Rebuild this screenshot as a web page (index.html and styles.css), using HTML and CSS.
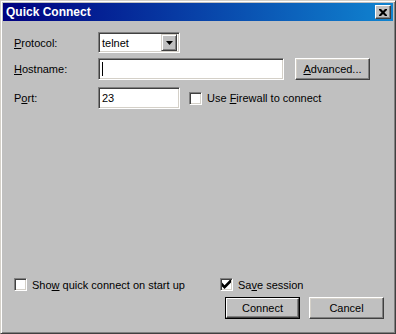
FILE: index.html
```html
<!DOCTYPE html>
<html lang="en">
<head>
    <meta charset="UTF-8">
    <title>Quick Connect</title>
    <link rel="stylesheet" href="styles.css">
</head>
<body>
    <div class="window">
        <div class="title-bar">
            <span class="title">Quick Connect</span>
            <button class="close-btn">
                <svg width="8" height="7" viewBox="0 0 8 7"><path d="M0 0h2l2 2 2-2h2v1l-2.5 2.5L8 6v1H6L4 5 2 7H0V6l2.5-2.5L0 1z" fill="#000"/></svg>
            </button>
        </div>
        <div class="content">
            <div class="row row-protocol">
                <label class="field-label"><u>P</u>rotocol:</label>
                <div class="select">
                    <span class="select-value">telnet</span>
                    <span class="select-arrow">
                        <svg width="7" height="4" viewBox="0 0 7 4"><path d="M0 0h7L3.5 4z" fill="#000"/></svg>
                    </span>
                </div>
            </div>
            <div class="row row-host">
                <label class="field-label"><u>H</u>ostname:</label>
                <div class="field host-field"><span class="caret"></span></div>
                <button class="btn advanced-btn"><u>A</u>dvanced...</button>
            </div>
            <div class="row row-port">
                <label class="field-label">P<u>o</u>rt:</label>
                <div class="field port-field">23</div>
                <label class="check firewall-check">
                    <span class="box"></span>
                    <span>Use <u>F</u>irewall to connect</span>
                </label>
            </div>
            <div class="spacer"></div>
            <div class="options">
                <label class="check startup-check">
                    <span class="box"></span>
                    <span>Sho<u>w</u> quick connect on start up</span>
                </label>
                <label class="check">
                    <span class="box">
                        <svg width="9" height="9" viewBox="0 0 7 7"><path d="M0 2v3l2 2 5-5V-1L2 4z" fill="#000"/></svg>
                    </span>
                    <span>Sa<u>v</u>e session</span>
                </label>
            </div>
            <div class="actions">
                <button class="btn default-btn"><span class="btn-inner">Connect</span></button>
                <button class="btn">Cancel</button>
            </div>
        </div>
    </div>
</body>
</html>
```

FILE: styles.css
```css
* {
    box-sizing: border-box;
}

body {
    margin: 0;
    font-family: 'Liberation Sans', Arial, sans-serif;
    font-size: 11px;
    color: #000;
    background: #c0c0c0;
}

.window {
    width: 396px;
    height: 334px;
    padding: 2px;
    background: #c0c0c0;
    border: 1px solid;
    border-color: #d4d0c8 #404040 #404040 #d4d0c8;
    box-shadow: inset 1px 1px #fff, inset -1px -1px #808080;
    display: flex;
    flex-direction: column;
}

.title-bar {
    height: 18px;
    background: linear-gradient(to right, #000080, #1084d0);
    display: flex;
    align-items: center;
    justify-content: space-between;
    padding: 0 2px 0 3px;
}

.title {
    color: #fff;
    font-weight: bold;
    font-size: 12px;
}

.close-btn {
    width: 16px;
    height: 14px;
    padding: 0;
    background: #c0c0c0;
    border: 1px solid;
    border-color: #fff #404040 #404040 #fff;
    box-shadow: inset -1px -1px #808080;
    display: flex;
    align-items: center;
    justify-content: center;
}

.content {
    flex: 1;
    display: flex;
    flex-direction: column;
    padding: 11px 9px 12px 11px;
}

.row {
    display: flex;
    align-items: center;
}

.row-host {
    margin-top: 5px;
}

.row-port {
    margin-top: 7px;
}

.field-label {
    width: 84px;
}

.field,
.select {
    background: #fff;
    border: 1px solid;
    border-color: #808080 #fff #fff #808080;
    box-shadow: inset 1px 1px #404040, inset -1px -1px #d4d0c8;
    height: 22px;
    display: flex;
    align-items: center;
    padding: 0 3px;
}

.select {
    width: 82px;
    height: 21px;
    justify-content: space-between;
    padding: 0 2px 0 3px;
}

.select-arrow {
    width: 16px;
    height: 17px;
    background: #c0c0c0;
    border: 1px solid;
    border-color: #d4d0c8 #404040 #404040 #d4d0c8;
    box-shadow: inset 1px 1px #fff, inset -1px -1px #808080;
    display: flex;
    align-items: center;
    justify-content: center;
}

.host-field {
    width: 186px;
}

.caret {
    width: 1px;
    height: 14px;
    background: #000;
}

.port-field {
    width: 82px;
}

.btn {
    font-family: inherit;
    font-size: 11px;
    color: #000;
    width: 75px;
    height: 22px;
    padding: 0;
    background: #c0c0c0;
    border: 1px solid;
    border-color: #fff #404040 #404040 #fff;
    box-shadow: inset -1px -1px #808080, inset 1px 1px #d4d0c8;
}

.advanced-btn {
    margin-left: 11px;
}

.default-btn {
    border: 1px solid #000;
    box-shadow: none;
    display: flex;
}

.btn-inner {
    flex: 1;
    display: flex;
    align-items: center;
    justify-content: center;
    border: 1px solid;
    border-color: #fff #404040 #404040 #fff;
    box-shadow: inset -1px -1px #808080;
}

.check {
    display: flex;
    align-items: center;
    gap: 5px;
}

.box {
    width: 13px;
    height: 13px;
    background: #fff;
    border: 1px solid;
    border-color: #808080 #fff #fff #808080;
    box-shadow: inset 1px 1px #404040, inset -1px -1px #d4d0c8;
    display: flex;
    align-items: center;
    justify-content: center;
}

.firewall-check {
    margin-left: 9px;
}

.spacer {
    flex: 1;
}

.options {
    display: flex;
    align-items: center;
}

.startup-check {
    width: 206px;
}

.actions {
    display: flex;
    justify-content: flex-end;
    gap: 9px;
    margin-top: 6px;
}
```
